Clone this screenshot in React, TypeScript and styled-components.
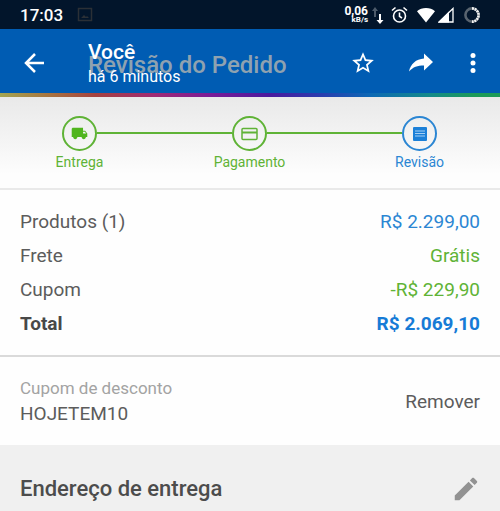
import React from "react";
import styled, { createGlobalStyle } from "styled-components";

const GREEN = "#5fb336";
const BLUE = "#2b86d3";

const GlobalStyle = createGlobalStyle`
  * { box-sizing: border-box; }
  body {
    margin: 0;
    background: #f0f0f0;
    font-family: Roboto, "Liberation Sans", sans-serif;
    color: #5c5c5c;
  }
  button {
    display: flex;
    padding: 0;
    border: 0;
    background: none;
    font: inherit;
    color: inherit;
    cursor: pointer;
  }
  svg { display: block; flex: none; }
`;

const StatusBar = styled.div`
  display: flex;
  align-items: center;
  height: 29px;
  padding: 0 19px 0 20px;
  background: #02152b;
  color: #fff;
`;

const Clock = styled.time`
  font-size: 17px;
  line-height: 20px;
  font-weight: 500;
  margin-right: 14px;
`;

const StatusIcons = styled.div`
  display: flex;
  align-items: center;
  margin-left: auto;
`;

const Speed = styled.div`
  display: flex;
  flex-direction: column;
  align-items: flex-end;
  font-weight: 700;
  font-size: 12px;
  line-height: 10px;
  margin-right: 2px;
`;

const SpeedUnit = styled.span`
  font-size: 8px;
  line-height: 8px;
`;

const Gap = styled.span<{ $size: number }>`
  flex: none;
  width: ${(p) => p.$size}px;
`;

const Header = styled.header`
  display: flex;
  align-items: center;
  height: 64px;
  padding: 4px 22px 0 22px;
  background: #005cb3;
  color: #fff;
`;

const Heading = styled.div`
  position: relative;
  flex: 1;
  margin-left: 42px;
`;

const PageTitle = styled.h1`
  position: absolute;
  top: 13px;
  left: 0;
  margin: 0;
  font-size: 24px;
  line-height: 28px;
  font-weight: 500;
  white-space: nowrap;
  color: #8fa2b0;
`;

const Sender = styled.div`
  position: relative;
  font-size: 21px;
  line-height: 28px;
  font-weight: 500;
`;

const SentAt = styled.div`
  position: relative;
  font-size: 16px;
  line-height: 22px;
`;

const Actions = styled.div`
  display: flex;
  align-items: center;
`;

const Rainbow = styled.div`
  height: 4px;
  background: linear-gradient(
    90deg,
    #a3a552 0%,
    #a8733f 10%,
    #a5423f 19%,
    #a02a75 31%,
    #7a1c97 42%,
    #4a1a9e 54%,
    #2a3cae 64%,
    #0c68b5 74%,
    #148a8a 86%,
    #1c9a58 95%
  );
`;

const Steps = styled.ol`
  display: flex;
  margin: 0;
  padding: 19px 63px 17px 62px;
  list-style: none;
  background: linear-gradient(#e9e9e9, #fdfdfd 85%);
  border-bottom: 2px solid #e9e9e9;
`;

const Step = styled.li<{ $color: string }>`
  display: flex;
  flex-direction: column;
  align-items: center;
  flex: none;
  width: 35px;
  font-size: 14px;
  line-height: 18px;
  color: ${(p) => p.$color};
`;

const Circle = styled.span`
  display: flex;
  align-items: center;
  justify-content: center;
  width: 35px;
  height: 35px;
  margin-bottom: 2px;
  border: 2px solid currentColor;
  border-radius: 50%;
`;

const Connector = styled.li`
  flex: 1;
  height: 2px;
  margin-top: 16px;
  background: ${GREEN};
`;

const Summary = styled.dl`
  margin: 0;
  padding: 15px 20px 14px;
  background: #fefefe;
  border-bottom: 2px solid #dadada;
`;

const Line = styled.div<{ $total?: boolean }>`
  display: flex;
  justify-content: space-between;
  font-size: 19px;
  line-height: 34px;
  font-weight: ${(p) => (p.$total ? 700 : 400)};
  color: ${(p) => (p.$total ? "#484848" : "#5c5c5c")};
`;

const Amount = styled.dd<{ $color: string }>`
  margin: 0;
  color: ${(p) => p.$color};
`;

const Coupon = styled.section`
  display: flex;
  align-items: center;
  justify-content: space-between;
  padding: 19px 20px;
  background: #fefefe;
  font-size: 19px;
  line-height: 25px;
`;

const CouponLabel = styled.div`
  font-size: 17px;
  color: #a3a3a3;
`;

const Address = styled.section`
  display: flex;
  align-items: center;
  justify-content: space-between;
  padding: 28px 19px 8px 20px;
  background: #f0f0f0;
`;

const AddressTitle = styled.h2`
  margin: 0;
  font-size: 22px;
  line-height: 32px;
  font-weight: 500;
  color: #4c4c4c;
`;

const lines = [
  { label: "Produtos (1)", value: "R$ 2.299,00", color: BLUE },
  { label: "Frete", value: "Grátis", color: GREEN },
  { label: "Cupom", value: "-R$ 229,90", color: GREEN },
  { label: "Total", value: "R$ 2.069,10", color: "#167bd6", total: true },
];

export default function App() {
  return (
    <>
      <GlobalStyle />
      <StatusBar>
        <Clock>17:03</Clock>
        <svg width="16" height="16" viewBox="0 0 16 16" fill="none" stroke="#2b3036" strokeWidth="1.5">
          <rect x="1.5" y="1.5" width="13" height="12" />
          <path d="M4 11l3-3 2 2 1-1 2 2z" fill="#2b3036" stroke="none" />
        </svg>
        <StatusIcons>
          <Speed>
            0,06
            <SpeedUnit>kB/s</SpeedUnit>
          </Speed>
          <svg width="14" height="18" viewBox="0 0 14 18">
            <path d="M5 1L8 5H6V11H4V5H2z" fill="#4d5b6b" />
            <path d="M10 18L6.500 14H9V8h2v6H13.500z" fill="#fff" />
          </svg>
          <Gap $size={7} />
          <svg width="17" height="18" viewBox="0 0 17 18" fill="none" stroke="#fff" strokeWidth="1.6">
            <circle cx="8.500" cy="10" r="6" />
            <path d="M8.500 6.500V10.300L11 12M1 4.500L4.500 1.500M16 4.500L12.500 1.500" />
          </svg>
          <Gap $size={8} />
          <svg width="20" height="16" viewBox="0 0 20 16" fill="#fff">
            <path d="M10 15.500L1 4.300C3.500 2 6.500 1 10 1s6.500 1 9 3.300z" />
          </svg>
          <Gap $size={2} />
          <svg width="16" height="16" viewBox="0 0 16 16">
            <path d="M15 1.500V15H1z" fill="none" stroke="#fff" strokeWidth="1.300" />
            <path d="M11 4.500V15.500H0.500z" fill="#fff" />
          </svg>
          <Gap $size={9} />
          <svg width="18" height="18" viewBox="0 0 18 18" fill="none" strokeWidth="2.600">
            <circle cx="9" cy="9" r="6.600" stroke="#59646f" />
            <path d="M9 2.400A6.600 6.600 0 0 1 9 15.600" stroke="#f3f3f3" strokeDasharray="2 0.700" />
          </svg>
        </StatusIcons>
      </StatusBar>

      <Header>
        <button aria-label="Voltar">
          <svg width="24" height="24" viewBox="0 0 24 24" fill="none" stroke="#fff" strokeWidth="2.500">
            <path d="M22 12H4.500M13 3L4 12l9 9" />
          </svg>
        </button>
        <Heading>
          <PageTitle>Revisão do Pedido</PageTitle>
          <Sender>Você</Sender>
          <SentAt>há 6 minutos</SentAt>
        </Heading>
        <Actions>
          <button aria-label="Favoritar">
            <svg width="26" height="26" viewBox="0 0 24 24" fill="#fff">
              <path d="M22 9.240l-7.190-.62L12 2 9.190 8.630 2 9.240l5.460 4.730L5.820 21 12 17.270 18.180 21l-1.630-7.030L22 9.240zM12 15.400l-3.760 2.270 1-4.280-3.320-2.880 4.380-.38L12 6.100l1.710 4.040 4.380.38-3.320 2.880 1 4.280L12 15.400z" />
            </svg>
          </button>
          <Gap $size={32} />
          <button aria-label="Encaminhar">
            <svg width="26" height="26" viewBox="0 0 26 26" fill="#fff">
              <path d="M16 3.500L25 12 16 20.500V15.500C9.500 15.500 5 17 1 21.500 2.500 14 8 9 16 8.500z" />
            </svg>
          </button>
          <Gap $size={34} />
          <button aria-label="Mais opções">
            <svg width="10" height="24" viewBox="0 0 10 24" fill="#fff">
              <circle cx="5" cy="4.500" r="2.500" />
              <circle cx="5" cy="12" r="2.500" />
              <circle cx="5" cy="19.500" r="2.500" />
            </svg>
          </button>
        </Actions>
      </Header>
      <Rainbow />

      <Steps>
        <Step $color={GREEN}>
          <Circle>
            <svg width="17" height="17" viewBox="0 0 24 24" fill="#50b51e">
              <path d="M20 8h-3V4H3c-1.100 0-2 .9-2 2v11h2c0 1.660 1.340 3 3 3s3-1.340 3-3h6c0 1.660 1.340 3 3 3s3-1.340 3-3h2v-5l-3-4zm-.5 1.500l1.960 2.500H17V9.500h2.500z" />
            </svg>
          </Circle>
          Entrega
        </Step>
        <Connector aria-hidden="true" />
        <Step $color={GREEN}>
          <Circle>
            <svg width="17" height="14" viewBox="0 0 17 14" fill="none" stroke="currentColor" strokeWidth="1.500">
              <rect x="1" y="1.500" width="15" height="11" rx="1" />
              <path d="M1 5.500H16" strokeWidth="2" />
            </svg>
          </Circle>
          Pagamento
        </Step>
        <Connector aria-hidden="true" />
        <Step $color={BLUE} aria-current="step">
          <Circle>
            <svg width="14" height="14" viewBox="0 0 14 14">
              <rect width="14" height="14" rx="1" fill="#1c80d8" />
              <path d="M2 4H12M2 6.500H12M2 9H12" stroke="#a5cff3" strokeWidth="1.200" />
            </svg>
          </Circle>
          Revisão
        </Step>
      </Steps>

      <Summary>
        {lines.map((l) => (
          <Line key={l.label} $total={l.total}>
            <dt>{l.label}</dt>
            <Amount $color={l.color}>{l.value}</Amount>
          </Line>
        ))}
      </Summary>

      <Coupon>
        <div>
          <CouponLabel>Cupom de desconto</CouponLabel>
          HOJETEM10
        </div>
        <button>Remover</button>
      </Coupon>

      <Address>
        <AddressTitle>Endereço de entrega</AddressTitle>
        <button aria-label="Editar endereço">
          <svg width="30" height="30" viewBox="0 0 24 24" fill="#929292">
            <path d="M3 17.250V21h3.750L17.810 9.940l-3.750-3.750L3 17.250zM20.710 7.040c.39-.39.39-1.020 0-1.410l-2.340-2.340c-.39-.39-1.020-.39-1.410 0l-1.830 1.830 3.750 3.750 1.830-1.830z" />
          </svg>
        </button>
      </Address>
    </>
  );
}
